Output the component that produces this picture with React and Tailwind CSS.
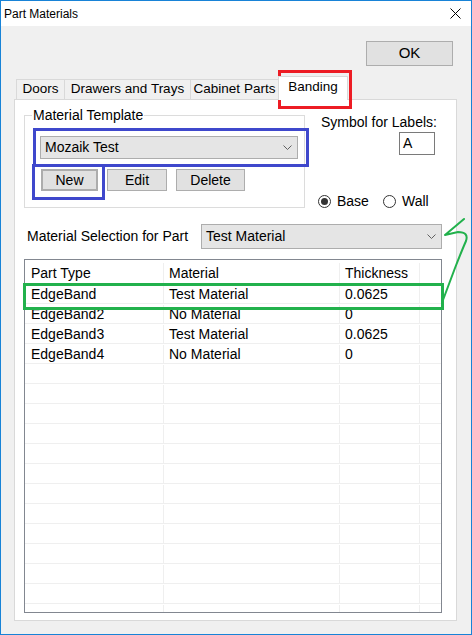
import React from 'react';

const FONT = { fontFamily: '"Liberation Sans", Arial, sans-serif' };

const ROWS = [
  ['EdgeBand', 'Test Material', '0.0625'],
  ['EdgeBand2', 'No Material', '0'],
  ['EdgeBand3', 'Test Material', '0.0625'],
  ['EdgeBand4', 'No Material', '0'],
];

function Chevron() {
  return (
    <svg width="9" height="5" viewBox="0 0 9 5" className="shrink-0">
      <polyline points="0.5,0.5 4.5,4.5 8.5,0.5" fill="none" stroke="#606060" strokeWidth="1" />
    </svg>
  );
}

function Combo({ text, className }) {
  return (
    <div className={`flex items-center justify-between bg-[#e5e5e5] border border-[#adadad] pl-[4px] pr-[5px] ${className}`}>
      <span>{text}</span>
      <Chevron />
    </div>
  );
}

function Btn({ children, className }) {
  return (
    <div className={`flex items-center justify-center bg-[#e1e1e1] border border-[#adadad] ${className}`}>
      {children}
    </div>
  );
}

function Radio({ checked, label, className }) {
  return (
    <div className={`flex items-center leading-[16px] ${className}`}>
      <div className="w-[13px] h-[13px] rounded-full border border-[#333] bg-white flex items-center justify-center">
        {checked && <div className="w-[7px] h-[7px] rounded-full bg-[#333]" />}
      </div>
      <span className="ml-[6px]">{label}</span>
    </div>
  );
}

function GridRow({ cells, header }) {
  return (
    <div className={`flex border-b border-[#efefef] ${header ? 'h-[24px] pt-[3px]' : 'h-[20px] pt-[1px]'} shrink-0`}>
      <div className="w-[139px] border-r border-[#efefef] pl-[6px] flex items-center">{cells[0]}</div>
      <div className="w-[176px] border-r border-[#efefef] pl-[5px] flex items-center">{cells[1]}</div>
      <div className="w-[80px] border-r border-[#efefef] pl-[5px] flex items-center">{cells[2]}</div>
      <div className="flex-1" />
    </div>
  );
}

export default function App() {
  const empty = Array.from({ length: 13 }, () => ['', '', '']);

  return (
    <div className="relative w-[472px] h-[635px] overflow-hidden text-[14px] text-black" style={FONT}>
      <div className="w-full h-full border border-[#1883d7] flex flex-col bg-[#f0f0f0]">
        {/* Title bar */}
        <div className="h-[25px] bg-white flex items-center justify-between pl-[3px] pr-[10px] text-[12px] shrink-0">
          <span>Part Materials</span>
          <svg width="11" height="11" viewBox="0 0 11 11">
            <path d="M0.5 0.5 L10.5 10.5 M10.5 0.5 L0.5 10.5" stroke="#000" strokeWidth="1" />
          </svg>
        </div>

        {/* OK */}
        <div className="flex justify-end pr-[18px] pt-[15px]">
          <Btn className="w-[87px] h-[25px] text-[15px]">OK</Btn>
        </div>

        {/* Tabs */}
        <div className="flex items-end h-[23px] mt-[10px] ml-[15px] text-[13.5px]">
          <div className="w-[49px] h-[20px] border border-b-0 border-[#d9d9d9] flex items-center justify-center">Doors</div>
          <div className="w-[127px] h-[20px] -ml-px border border-b-0 border-[#d9d9d9] flex items-center justify-center">Drawers and Trays</div>
          <div className="w-[89px] h-[20px] -ml-px border border-b-0 border-[#d9d9d9] flex items-center justify-center">Cabinet Parts</div>
          <div className="relative z-10 w-[70px] h-[24px] -ml-px -mb-px bg-white border border-b-0 border-[#d9d9d9] flex items-center justify-center pb-[2px]">Banding</div>
        </div>

        {/* Panel */}
        <div className="ml-[13px] w-[443px] h-[522px] bg-white border border-[#d9d9d9] pl-[9px] pt-[15px]">
          <div className="flex items-start h-[93px]">
            {/* Material Template group */}
            <div className="relative w-[281px] h-[93px] border border-[#dcdcdc]">
              <span className="absolute left-[7px] -top-[9px] bg-white px-[1px] leading-[16px]">Material Template</span>
              <Combo text="Mozaik Test" className="ml-[15px] mt-[20px] w-[258px] h-[23px]" />
              <div className="flex ml-[16px] mt-[10px] gap-[9px]">
                <Btn className="w-[57px] h-[22px] border-2 border-[#0078d7]">New</Btn>
                <Btn className="w-[60px] h-[22px]">Edit</Btn>
                <Btn className="w-[69px] h-[22px]">Delete</Btn>
              </div>
            </div>

            {/* Right column */}
            <div className="ml-[16px] -mt-[1px] flex flex-col">
              <span className="leading-[16px]">Symbol for Labels:</span>
              <div className="ml-[78px] mt-[2px] w-[36px] h-[23px] border border-[#7a7a7a] pl-[3px] flex items-center">A</div>
              <div className="flex mt-[38px] -ml-[3px]">
                <Radio checked label="Base" className="w-[65px]" />
                <Radio label="Wall" />
              </div>
            </div>
          </div>

          {/* Material selection */}
          <div className="flex items-center mt-[16px]">
            <span className="ml-[3px] w-[174px]">Material Selection for Part</span>
            <Combo text="Test Material" className="w-[241px] h-[25px]" />
          </div>

          {/* Grid */}
          <div className="mt-[10px] w-[418px] h-[354px] border border-[#828790] overflow-hidden flex flex-col">
            <GridRow header cells={['Part Type', 'Material', 'Thickness']} />
            {ROWS.map((r, i) => <GridRow key={i} cells={r} />)}
            {empty.map((r, i) => <GridRow key={'e' + i} cells={r} />)}
          </div>
        </div>
      </div>

      {/* Annotations */}
      <div className="absolute left-[278px] top-[70px] w-[74px] h-[39px] border-[3px] border-[#ed1c24]" />
      <div className="absolute left-[33px] top-[128px] w-[276px] h-[39px] border-[3px] border-[#3f48cc]" />
      <div className="absolute left-[32px] top-[164px] w-[73px] h-[36px] border-[3px] border-[#3f48cc]" />
      <div className="absolute left-[23px] top-[283px] w-[421px] h-[27px] border-[3px] border-[#22b14c]" />
      <svg className="absolute left-0 top-0" width="472" height="635" viewBox="0 0 472 635" style={{ pointerEvents: 'none' }}>
        <path
          d="M443 300 L455 268 Q462 250 466 241 Q469 232 458 232 L445 235 L464 219"
          fill="none"
          stroke="#22b14c"
          strokeWidth="2"
          strokeLinecap="round"
          strokeLinejoin="round"
        />
      </svg>
    </div>
  );
}
